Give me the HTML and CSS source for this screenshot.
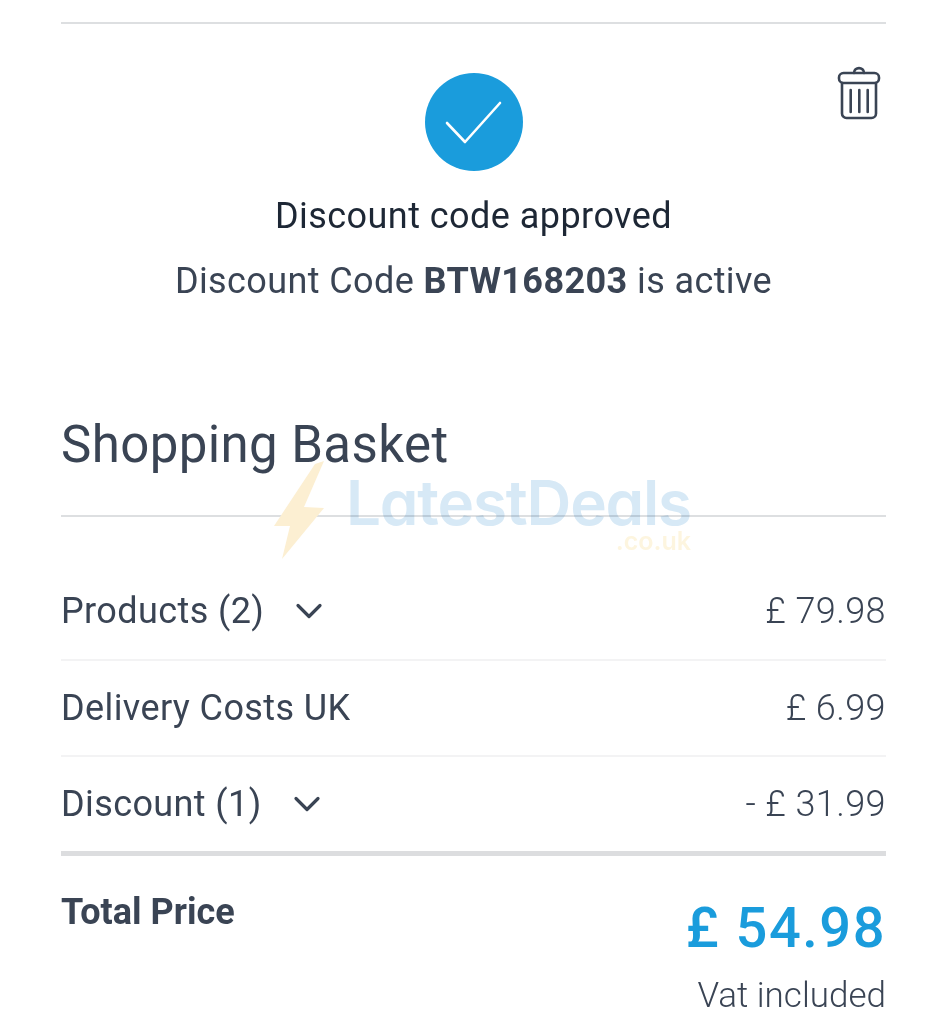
FILE: index.html
```
<!DOCTYPE html>
<html lang="en">
<head>
<meta charset="utf-8">
<title>Shopping Basket</title>
<link rel="stylesheet" href="styles.css">
</head>
<body>
<main class="page">
  <section class="notice">
    <svg class="trash" viewBox="0 0 46 54" width="46" height="54" fill="none" stroke="#3a4454" stroke-width="2.6" stroke-linecap="round" stroke-linejoin="round">
      <path d="M18 7 C18 0.500 28 0.500 28 7"/>
      <rect x="3" y="7" width="40" height="10" rx="4.500"/>
      <path d="M6 17V47.500a4.500 4.500 0 0 0 4.500 4.500h25a4.500 4.500 0 0 0 4.500-4.500V17"/>
      <path d="M14.700 24V46M23.300 24V46M31.700 24V46"/>
    </svg>
    <div class="badge">
      <svg viewBox="0 0 98 98" width="98" height="98" fill="none" stroke="#fff" stroke-width="2.600" stroke-linecap="round" stroke-linejoin="round"><path d="M22 50 L40 69 L75 30"/></svg>
    </div>
    <h2 class="approved">Discount code approved</h2>
    <p class="active">Discount Code <strong>BTW168203</strong> is active</p>
  </section>

  <h1 class="title">Shopping Basket</h1>

  <section class="rows">
    <div class="row">
      <span class="label">Products (2)<svg class="chev" viewBox="0 0 28 18" width="28" height="18" fill="none" stroke="#3a4454" stroke-width="3.200" stroke-linecap="round" stroke-linejoin="round"><path d="M3 3.500 L14 14.500 L25 3.500"/></svg></span>
      <span class="amount">£ 79.98</span>
    </div>
    <div class="row">
      <span class="label">Delivery Costs UK</span>
      <span class="amount">£ 6.99</span>
    </div>
    <div class="row">
      <span class="label">Discount (1)<svg class="chev" viewBox="0 0 28 18" width="28" height="18" fill="none" stroke="#3a4454" stroke-width="3.200" stroke-linecap="round" stroke-linejoin="round"><path d="M3 3.500 L14 14.500 L25 3.500"/></svg></span>
      <span class="amount">- £ 31.99</span>
    </div>
  </section>

  <section class="total">
    <strong class="total-label">Total Price</strong>
    <div class="total-side">
      <div class="total-price">£ 54.98</div>
      <div class="vat">Vat included</div>
    </div>
  </section>
</main>

<div class="watermark" aria-hidden="true">
  <svg class="bolt" viewBox="0 0 52 100" width="52" height="100"><path d="M50 1 L41 4 L0 66 L16 66 L8 99 L50 48 L30 47 Z" fill="#fcefd2"/></svg>
  <div class="wm-text">
    <span class="wm-name">LatestDeals</span>
    <span class="wm-tld">.co.uk</span>
  </div>
</div>
</body>
</html>
```
FILE: styles.css
```
* { box-sizing: border-box; }
html, body { margin: 0; background: #fff; }
body {
  position: relative;
  height: 1024px;
  overflow: hidden;
  font-family: Roboto, "Liberation Sans", sans-serif;
  color: #3a4454;
}
.page { padding: 22px 61px 0; }
.notice {
  position: relative;
  height: 336px;
  border-top: 2px solid #dddfe1;
  padding-top: 49px;
  text-align: center;
}
.trash { position: absolute; top: 42px; right: 4px; }
.badge {
  width: 98px;
  height: 98px;
  margin: 0 auto;
  border-radius: 50%;
  background: #1a9cdc;
}
.badge svg { display: block; }
.approved {
  margin: 24px 0 0;
  font-size: 36px;
  line-height: 42px;
  font-weight: 400;
  color: #1d2735;
  letter-spacing: 0.45px;
}
.active {
  margin: 23px 0 0;
  font-size: 36px;
  line-height: 42px;
  letter-spacing: 0.4px;
}
.active strong { font-weight: 700; }
.title {
  margin: 0;
  height: 159px;
  padding-top: 57px;
  border-bottom: 2px solid #dddfe1;
  font-size: 51px;
  line-height: 60px;
  font-weight: 400;
  letter-spacing: 0.4px;
}
.rows { border-bottom: 5px solid #dcdddf; }
.row {
  display: flex;
  justify-content: space-between;
  align-items: center;
  height: 96px;
  border-bottom: 2px solid #f3f3f4;
  font-size: 36px;
  letter-spacing: 0.4px;
}
.row:first-child { height: 144px; padding-top: 46px; }
.row:last-child { border-bottom: 0; height: 94px; }
.label { display: flex; align-items: center; }
.chev { margin-left: 31px; }
.amount { font-weight: 300; }
.total {
  display: flex;
  justify-content: space-between;
  align-items: flex-start;
}
.total-label {
  margin-top: 35px;
  font-size: 36px;
  line-height: 42px;
  font-weight: 700;
}
.total-side { text-align: right; }
.total-price {
  margin-top: 39px;
  font-size: 56px;
  line-height: 66px;
  font-weight: 500;
  color: #1a9cdc;
  letter-spacing: 1.5px;
}
.vat {
  margin-top: 15px;
  font-size: 35px;
  line-height: 40px;
  font-weight: 300;
}
.watermark {
  position: absolute;
  left: 274px;
  top: 460px;
  display: flex;
  gap: 20px;
  pointer-events: none;
}
.wm-text { display: flex; flex-direction: column; align-items: flex-end; margin-top: 9px; }
.wm-name {
  font-family: Inter, "Liberation Sans", sans-serif;
  font-feature-settings: "cv11";
  font-size: 62px;
  line-height: 68px;
  font-weight: 600;
  letter-spacing: -1.2px;
  color: #d7e9f6;
  mix-blend-mode: multiply;
}
.wm-tld {
  font-family: Inter, "Liberation Sans", sans-serif;
  font-feature-settings: "cv11";
  font-size: 25px;
  line-height: 24px;
  font-weight: 600;
  color: #fdf5df;
  margin-top: -8px;
}
```
